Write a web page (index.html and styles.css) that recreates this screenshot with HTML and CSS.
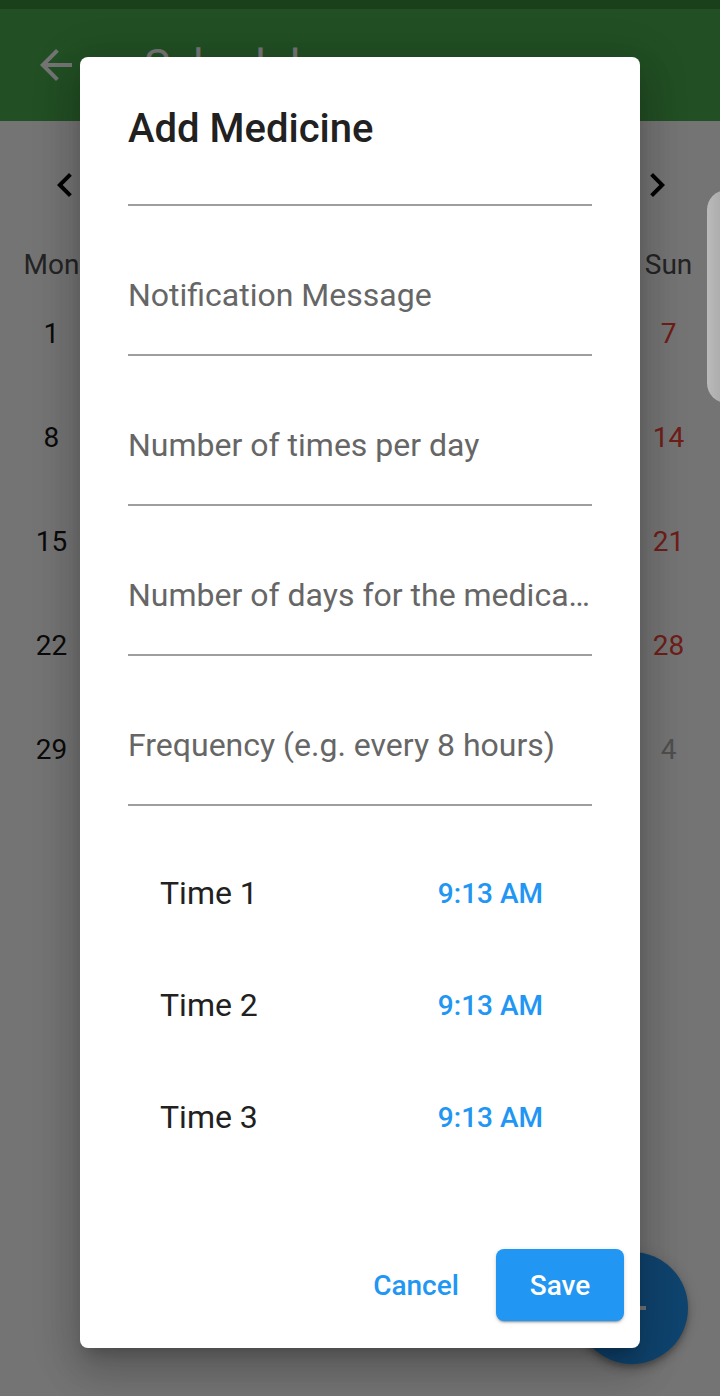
FILE: index.html
```html
<!DOCTYPE html>
<html lang="en">
<head>
<meta charset="utf-8">
<title>Schedule</title>
<link rel="stylesheet" href="styles.css">
</head>
<body>
<div class="screen">
  <div class="statusbar"></div>
  <header class="appbar">
    <svg class="appbar-icon" viewBox="0 0 24 24" width="48" height="48"><path d="M20 11H7.83l5.59-5.59L12 4l-8 8 8 8 1.41-1.41L7.83 13H20v-2z" fill="#fff"/></svg>
    <h1 class="appbar-title">Schedule</h1>
  </header>
  <section class="calendar">
    <div class="cal-header">
      <svg viewBox="0 0 24 24" width="48" height="48"><path d="M15.41 7.41L14 6l-6 6 6 6 1.41-1.41L10.83 12z" fill="#000"/></svg>
      <span class="cal-title">January 2024</span>
      <svg viewBox="0 0 24 24" width="48" height="48"><path d="M10 6L8.59 7.41 13.17 12l-4.58 4.59L10 18l6-6z" fill="#000"/></svg>
    </div>
    <div class="cal-grid">
      <div class="dow">Mon</div><div class="dow">Tue</div><div class="dow">Wed</div><div class="dow">Thu</div><div class="dow">Fri</div><div class="dow">Sat</div><div class="dow">Sun</div>
      <div class="day">1</div><div class="day">2</div><div class="day">3</div><div class="day">4</div><div class="day">5</div><div class="day weekend">6</div><div class="day weekend">7</div>
      <div class="day">8</div><div class="day">9</div><div class="day">10</div><div class="day">11</div><div class="day">12</div><div class="day weekend">13</div><div class="day weekend">14</div>
      <div class="day">15</div><div class="day">16</div><div class="day">17</div><div class="day">18</div><div class="day">19</div><div class="day weekend">20</div><div class="day weekend">21</div>
      <div class="day">22</div><div class="day">23</div><div class="day">24</div><div class="day">25</div><div class="day">26</div><div class="day weekend">27</div><div class="day weekend">28</div>
      <div class="day">29</div><div class="day">30</div><div class="day">31</div><div class="day outside">1</div><div class="day outside">2</div><div class="day outside">3</div><div class="day outside">4</div>
    </div>
  </section>
  <button class="fab"><svg viewBox="0 0 24 24" width="48" height="48"><path d="M19 13h-6v6h-2v-6H5v-2h6V5h2v6h6v2z" fill="#fff"/></svg></button>
</div>

<div class="scrim"></div>

<div class="dialog">
  <h2 class="dialog-title">Add Medicine</h2>
  <div class="dialog-content">
    <div class="form">
      <div class="field"><span class="hint">Medicine Name</span></div>
      <div class="field"><span class="hint">Notification Message</span></div>
      <div class="field"><span class="hint">Number of times per day</span></div>
      <div class="field"><span class="hint">Number of days for the medication</span></div>
      <div class="field"><span class="hint">Frequency (e.g. every 8 hours)</span></div>
      <div class="times">
        <div class="time-row"><span class="time-label">Time 1</span><button class="time-btn">9:13 AM</button></div>
        <div class="time-row"><span class="time-label">Time 2</span><button class="time-btn">9:13 AM</button></div>
        <div class="time-row"><span class="time-label">Time 3</span><button class="time-btn">9:13 AM</button></div>
      </div>
    </div>
  </div>
  <div class="dialog-actions">
    <button class="btn btn-text">Cancel</button>
    <button class="btn btn-filled">Save</button>
  </div>
</div>

<div class="edge-handle"></div>
</body>
</html>
```

FILE: styles.css
```css
html, body {
  margin: 0;
  padding: 0;
  width: 720px;
  height: 1396px;
  overflow: hidden;
}

body {
  font-family: Roboto, "Noto Sans", "Liberation Sans", sans-serif;
  background: #fff;
  position: relative;
}

.screen {
  width: 720px;
  height: 1396px;
  position: relative;
  background: #fff;
  display: flex;
  flex-direction: column;
}

.statusbar {
  height: 9px;
  background: #388e3c;
}

.appbar {
  height: 112px;
  background: #4caf50;
  display: flex;
  align-items: center;
  padding-left: 32px;
  box-sizing: border-box;
}

.appbar-icon {
  display: block;
}

.appbar-title {
  margin: 2px 0 0 64px;
  font-size: 44px;
  font-weight: 400;
  color: #fff;
  line-height: 48px;
}

.calendar {
  display: flex;
  flex-direction: column;
}

.cal-header {
  height: 128px;
  display: flex;
  align-items: center;
  justify-content: space-between;
  padding: 0 39px 0 41px;
}

.cal-header svg {
  display: block;
}

.cal-title {
  font-size: 34px;
  color: #000;
}

.cal-grid {
  display: grid;
  grid-template-columns: repeat(7, 1fr);
  grid-template-rows: 32px repeat(5, 104px);
}

.dow {
  font-size: 28px;
  line-height: 32px;
  color: #4f4f4f;
  text-align: center;
}

.day {
  font-size: 28px;
  color: #1a1a1a;
  display: flex;
  align-items: center;
  justify-content: center;
}

.day.weekend {
  color: #f44336;
}

.day.outside {
  color: #aeaeae;
}

.fab {
  position: absolute;
  right: 32px;
  bottom: 32px;
  width: 112px;
  height: 112px;
  border-radius: 50%;
  border: none;
  background: #2196f3;
  display: flex;
  align-items: center;
  justify-content: center;
  padding: 0;
  box-shadow: 0 6px 10px rgba(0,0,0,.14), 0 1px 18px rgba(0,0,0,.12), 0 3px 5px rgba(0,0,0,.2);
}

.scrim {
  position: absolute;
  inset: 0;
  background: rgba(0, 0, 0, 0.545);
}

.dialog {
  position: absolute;
  left: 80px;
  top: 57px;
  width: 560px;
  height: 1291px;
  background: #fff;
  border-radius: 8px;
  display: flex;
  flex-direction: column;
  overflow: hidden;
  box-shadow: 0 11px 15px -7px rgba(0,0,0,.2), 0 24px 38px 3px rgba(0,0,0,.14), 0 9px 46px 8px rgba(0,0,0,.12);
}

.dialog-title {
  margin: 0;
  padding: 48px 48px 0;
  font-size: 40px;
  font-weight: 500;
  line-height: 48px;
  color: #212121;
}

.dialog-content {
  margin-top: 39px;
  flex: 1;
  overflow: hidden;
  padding: 0 48px;
}

.form {
  margin-top: -136px;
  display: flex;
  flex-direction: column;
}

.field {
  height: 150px;
  box-sizing: border-box;
  padding: 70px 0 40px;
  border-bottom: 2px solid #9e9e9e;
}

.hint {
  display: block;
  font-size: 32px;
  line-height: 38px;
  color: #666;
  white-space: nowrap;
  overflow: hidden;
  text-overflow: ellipsis;
}

.times {
  margin-top: 31px;
  display: flex;
  flex-direction: column;
}

.time-row {
  height: 112px;
  display: flex;
  align-items: center;
  justify-content: space-between;
  padding: 0 32px;
}

.time-label {
  font-size: 32px;
  line-height: 38px;
  color: #212121;
}

.time-btn {
  font-family: inherit;
  border: none;
  background: none;
  padding: 0 17px 0 16px;
  height: 72px;
  font-size: 28px;
  font-weight: 500;
  color: #2196f3;
}

.dialog-actions {
  display: flex;
  justify-content: flex-end;
  gap: 16px;
  padding: 29px 16px 27px;
}

.btn {
  font-family: inherit;
  min-width: 128px;
  height: 72px;
  padding: 0 16px;
  border: none;
  border-radius: 8px;
  font-size: 28px;
  font-weight: 500;
}

.btn-text {
  background: none;
  color: #2196f3;
}

.btn-filled {
  background: #2196f3;
  color: #fff;
  box-shadow: 0 3px 1px -2px rgba(0,0,0,.2), 0 2px 2px rgba(0,0,0,.14), 0 1px 5px rgba(0,0,0,.12);
}

.edge-handle {
  position: absolute;
  left: 707px;
  top: 190px;
  width: 40px;
  height: 213px;
  border-radius: 22px;
  background: linear-gradient(90deg, #bababa 0%, #aaaaaa 40%, #a6a6a6 100%);
}
```
